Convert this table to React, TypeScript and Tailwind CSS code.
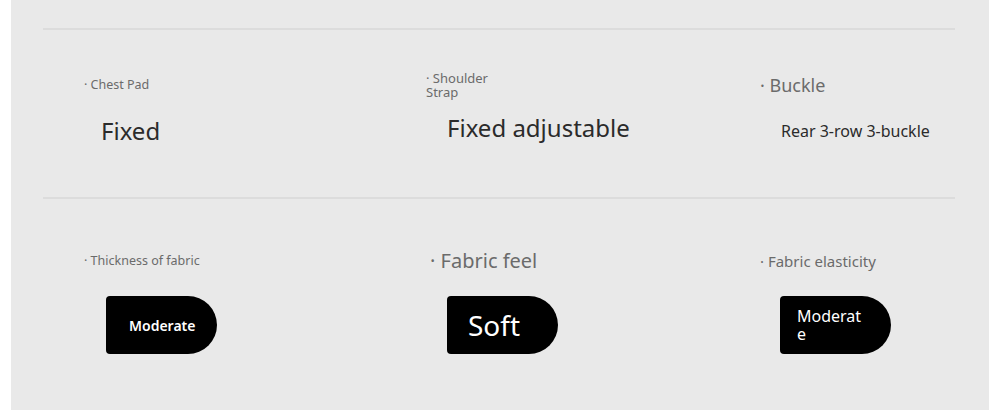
const font = { fontFamily: '"Noto Sans", "Open Sans", sans-serif' };

function Pill({ children, className }: { children: React.ReactNode; className: string }) {
  return (
    <div className={`flex h-[58px] w-[111px] items-center rounded-l-[4px] rounded-r-[29px] bg-black text-white ${className}`}>
      {children}
    </div>
  );
}

export default function App() {
  return (
    <div className="w-[1000px] h-[410px] bg-white px-[11px]" style={font}>
      <div className="h-full bg-[#e9e9e9] pt-[28px]">
        <div className="ml-[32px] mr-[34px] h-[2px] bg-[#dcdcdc]" />
        <div className="flex h-[167px] pl-[73px]">
          <div className="w-[342px]">
            <div className="mt-[47px] text-[12.5px] leading-[16px] text-[#6b6b6b]">· Chest Pad</div>
            <div className="mt-[22px] pl-[17px] text-[24px] leading-[32px] text-[#2b2b2b]">Fixed</div>
          </div>
          <div className="w-[334px]">
            <div className="mt-[41px] w-[70px] text-[13px] leading-[14px] text-[#6b6b6b]">· Shoulder Strap</div>
            <div className="mt-[13px] h-[36px] overflow-hidden pl-[21px] text-[24px] leading-[32px] text-[#2b2b2b]">
              Fixed adjustable
            </div>
          </div>
          <div className="flex-1">
            <div className="mt-[43px] text-[18px] leading-[24px] text-[#6b6b6b]">· Buckle</div>
            <div className="mt-[24px] pl-[21px] text-[16px] leading-[20px] text-[#2b2b2b]">Rear 3-row 3-buckle</div>
          </div>
        </div>
        <div className="ml-[32px] mr-[34px] h-[2px] bg-[#dcdcdc]" />
        <div className="flex pl-[73px]">
          <div className="w-[342px]">
            <div className="mt-[54px] text-[12.5px] leading-[16px] text-[#6b6b6b]">· Thickness of fabric</div>
            <Pill className="mt-[27px] ml-[22px] pl-[23px]">
              <span className="text-[14px] font-semibold">Moderate</span>
            </Pill>
          </div>
          <div className="w-[334px]">
            <div className="mt-[49px] pl-[4px] text-[20px] leading-[26px] text-[#6b6b6b]">· Fabric feel</div>
            <Pill className="mt-[22px] ml-[21px] pl-[21px]">
              <span className="text-[28px] leading-[34px]">Soft</span>
            </Pill>
          </div>
          <div className="flex-1">
            <div className="mt-[52px] text-[15px] leading-[20px] text-[#6b6b6b]">· Fabric elasticity</div>
            <Pill className="mt-[25px] ml-[20px] pl-[17px]">
              <span className="w-[66px] break-all text-[16px] leading-[18px]">Moderate</span>
            </Pill>
          </div>
        </div>
      </div>
    </div>
  );
}
